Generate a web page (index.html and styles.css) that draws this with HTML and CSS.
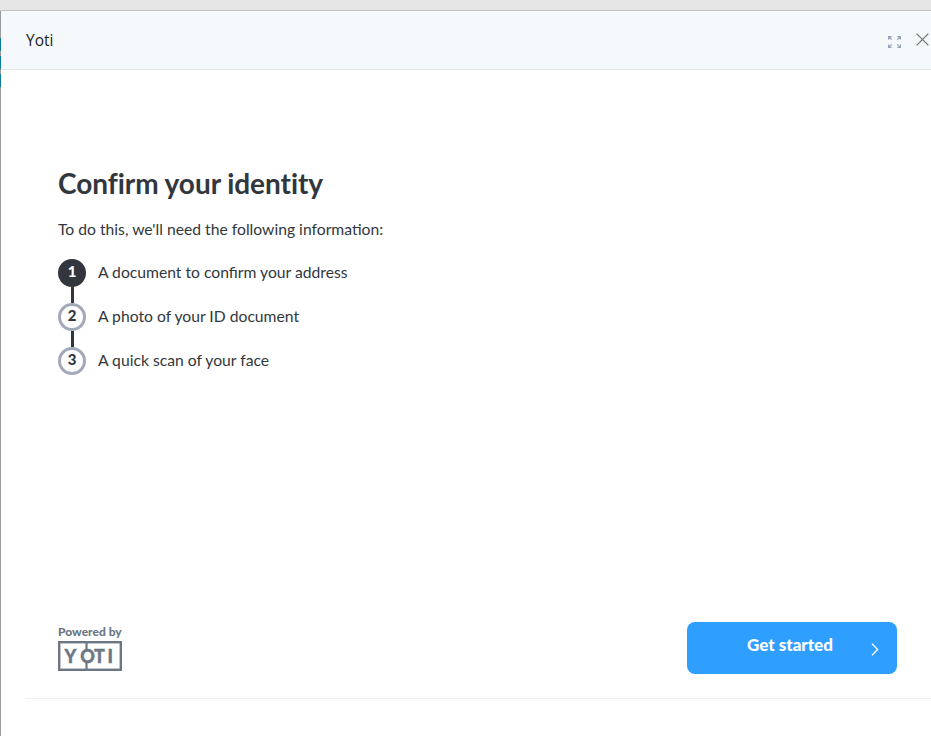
FILE: index.html
```html
<!DOCTYPE html>
<html lang="en">
<head>
<meta charset="utf-8">
<title>Yoti</title>
<link rel="stylesheet" href="styles.css">
</head>
<body>
<div class="topstrip"></div>
<div class="shell">
  <div class="edge"><i class="edge-blue"></i><i class="edge-blue"></i><i class="edge-blue"></i></div>
  <div class="panel">
    <header class="bar">
      <span class="bar-title">Yoti</span>
      <div class="bar-icons">
        <svg class="ico-expand" width="13" height="12" viewBox="0 0 13 12" fill="none" stroke="#98a2ba" stroke-width="1.3">
          <path d="M0.6 3.6V0.6H3.6M0.6 0.6L3.8 3.6M12.4 3.6V0.6H9.4M12.4 0.6L9.2 3.6M0.6 8.4V11.4H3.6M0.6 11.4L3.8 8.4M12.4 8.4V11.4H9.4M12.4 11.4L9.2 8.4"/>
        </svg>
        <svg class="ico-close" width="13" height="13" viewBox="0 0 13 13" fill="none" stroke="#6f767c" stroke-width="1.3">
          <path d="M0.6 0.6L12.4 12.4M12.4 0.6L0.6 12.4"/>
        </svg>
      </div>
    </header>
    <main class="content">
      <h1 class="title">Confirm your identity</h1>
      <p class="intro">To do this, we'll need the following information:</p>
      <ol class="steps">
        <li class="step"><span class="num num-active">1</span><span class="label">A document to confirm your address</span></li>
        <li class="step"><span class="num">2</span><span class="label">A photo of your ID document</span></li>
        <li class="step"><span class="num">3</span><span class="label">A quick scan of your face</span></li>
      </ol>
      <div class="spacer"></div>
      <div class="foot">
        <div class="brand">
          <span class="powered">Powered by</span>
          <svg class="logo" width="64" height="30" viewBox="0 0 64 30">
            <rect x="1.2" y="1.2" width="61.6" height="27.6" fill="none" stroke="#6c7784" stroke-width="2.4"/>
            <path d="M28.5 1V9M28.5 21V29" stroke="#6c7784" stroke-width="2.2"/>
            <text class="logo-text" x="6.5" y="22">Y</text>
            <text class="logo-text" x="22.2" y="22">O</text>
            <text class="logo-text" x="36" y="22">T</text>
            <text class="logo-text" x="49.6" y="22">I</text>
          </svg>
        </div>
        <button class="cta" type="button">
          <span class="cta-text">Get started</span>
          <svg class="cta-arrow" width="8" height="13" viewBox="0 0 8 13" fill="none" stroke="#fff" stroke-width="1.3"><path d="M1 0.8L6.6 6.5L1 12.2"/></svg>
        </button>
      </div>
      <div class="rule"></div>
    </main>
  </div>
</div>
</body>
</html>
```
FILE: styles.css
```css
* { box-sizing: border-box; }
html, body { margin: 0; padding: 0; height: 100%; overflow: hidden; background: #fff; }
body { font-family: "Lato", "Liberation Sans", sans-serif; color: #31373d; display: flex; flex-direction: column; }
.topstrip { height: 11px; flex: none; background: #e6e6e6; border-bottom: 1px solid #c4c4c4; }
.shell { flex: 1; display: flex; min-height: 0; }
.edge { width: 1px; flex: none; background: #9a9a9a; display: flex; flex-direction: column; gap: 5px; padding-top: 27px; }
.edge-blue { display: block; height: 13px; flex: none; background: #0b7ba1; }
.panel { flex: 1; display: flex; flex-direction: column; min-width: 0; }
.bar { height: 59px; flex: none; background: #f5f9fc; border-bottom: 1px solid #e3e6e9; display: flex; align-items: center; justify-content: space-between; padding: 0 2px 0 25px; }
.bar-title { font-family: "Open Sans", sans-serif; font-size: 15.5px; color: #1c2126; }
.bar-icons { display: flex; align-items: center; gap: 15px; }
.ico-expand { margin-top: 4px; }
.ico-close { margin-top: -2px; }
.content { flex: 1; display: flex; flex-direction: column; padding: 0 0 37px 24px; min-height: 0; }
.title { margin: 96px 0 0 33px; font-size: 28px; line-height: 34px; font-weight: 700; color: #31373d; letter-spacing: -0.05px; }
.intro { margin: 18px 0 0 33px; font-size: 15.7px; line-height: 22px; }
.steps { list-style: none; margin: 19px 0 0 33px; padding: 0; display: flex; flex-direction: column; gap: 16px; }
.step { display: flex; align-items: center; gap: 12px; height: 28px; position: relative; }
.step:not(:last-child)::after { content: ""; position: absolute; left: 13px; top: 28px; width: 3px; height: 16px; background: #31373d; }
.num { width: 28px; height: 28px; flex: none; border-radius: 50%; border: 3px solid #a2a9b8; display: flex; align-items: center; justify-content: center; font-size: 15px; font-weight: 900; color: #31373d; background: #fff; padding-bottom: 4px; }
.num-active { background: #31373d; border-color: #31373d; color: #fff; }
.label { font-size: 15.7px; line-height: 22px; margin-top: -3px; }
.spacer { flex: 1; }
.foot { display: flex; justify-content: space-between; align-items: flex-end; margin-left: 33px; padding-right: 34px; }
.brand { display: flex; flex-direction: column; gap: 2px; margin-bottom: 3px; }
.powered { font-size: 12px; line-height: 14px; font-weight: 900; color: #6c7784; white-space: nowrap; }
.logo { display: block; }
.logo-text { font-family: "Lato", sans-serif; font-size: 18px; font-weight: 900; fill: #6c7784; stroke: #6c7784; stroke-width: 0.4; }
.cta { width: 210px; height: 52px; background: #2e9fff; border: 0; border-radius: 8px; color: #fff; display: flex; align-items: center; padding: 0 0 0 60px; font-family: inherit; }
.cta-text { font-size: 17px; font-weight: 900; width: 124px; text-align: left; margin-top: -7px; white-space: nowrap; }
.cta-arrow { margin-top: 3px; }
.rule { height: 1px; background: #f0f0f0; margin-top: 24px; }
```
